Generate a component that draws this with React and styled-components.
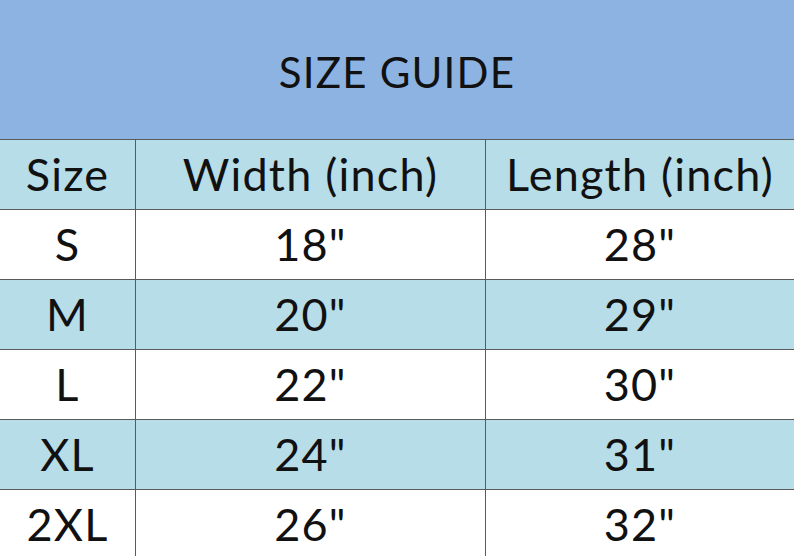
import React from 'react';
import styled, { createGlobalStyle } from 'styled-components';

const GlobalStyle = createGlobalStyle`
    html, body {
        margin: 0;
        padding: 0;
        background: #ffffff;
        overflow: hidden;
    }
    body {
        font-family: Lato, "Open Sans", sans-serif;
        color: #111111;
    }
`;

const Page = styled.div`
    width: 794px;
    height: 556px;
    overflow: hidden;
`;

const Banner = styled.div`
    height: 139px;
    background: #8db3e2;
    display: flex;
    align-items: center;
    justify-content: center;
    font-size: 42px;
    letter-spacing: 1.2px;
    padding-top: 4px;
    box-sizing: border-box;
`;

const Table = styled.div`
    display: grid;
    grid-template-columns: 135px 350px 1fr;
`;

const Cell = styled.div`
    height: 70px;
    box-sizing: border-box;
    border-top: 1px solid #5a5a5a;
    border-left: ${p => (p.first ? 'none' : '1px solid #5a5a5a')};
    background: ${p => (p.shaded ? '#b7dde8' : '#ffffff')};
    display: flex;
    align-items: center;
    justify-content: center;
    font-size: 45px;
    letter-spacing: 1.2px;
    padding-bottom: 2px;
`;

const head = ['Size', 'Width (inch)', 'Length (inch)'];

const rows = [
    ['S', '18"', '28"'],
    ['M', '20"', '29"'],
    ['L', '22"', '30"'],
    ['XL', '24"', '31"'],
    ['2XL', '26"', '32"'],
];

const App = () => {
    const all = [head, ...rows];
    return (
        <Page>
            <GlobalStyle />
            <Banner>SIZE GUIDE</Banner>
            <Table>
                {all.map((r, i) =>
                    r.map((c, j) => (
                        <Cell key={i + '-' + j} first={j === 0} shaded={i % 2 === 0}>
                            {c}
                        </Cell>
                    ))
                )}
            </Table>
        </Page>
    );
};

export default App;
